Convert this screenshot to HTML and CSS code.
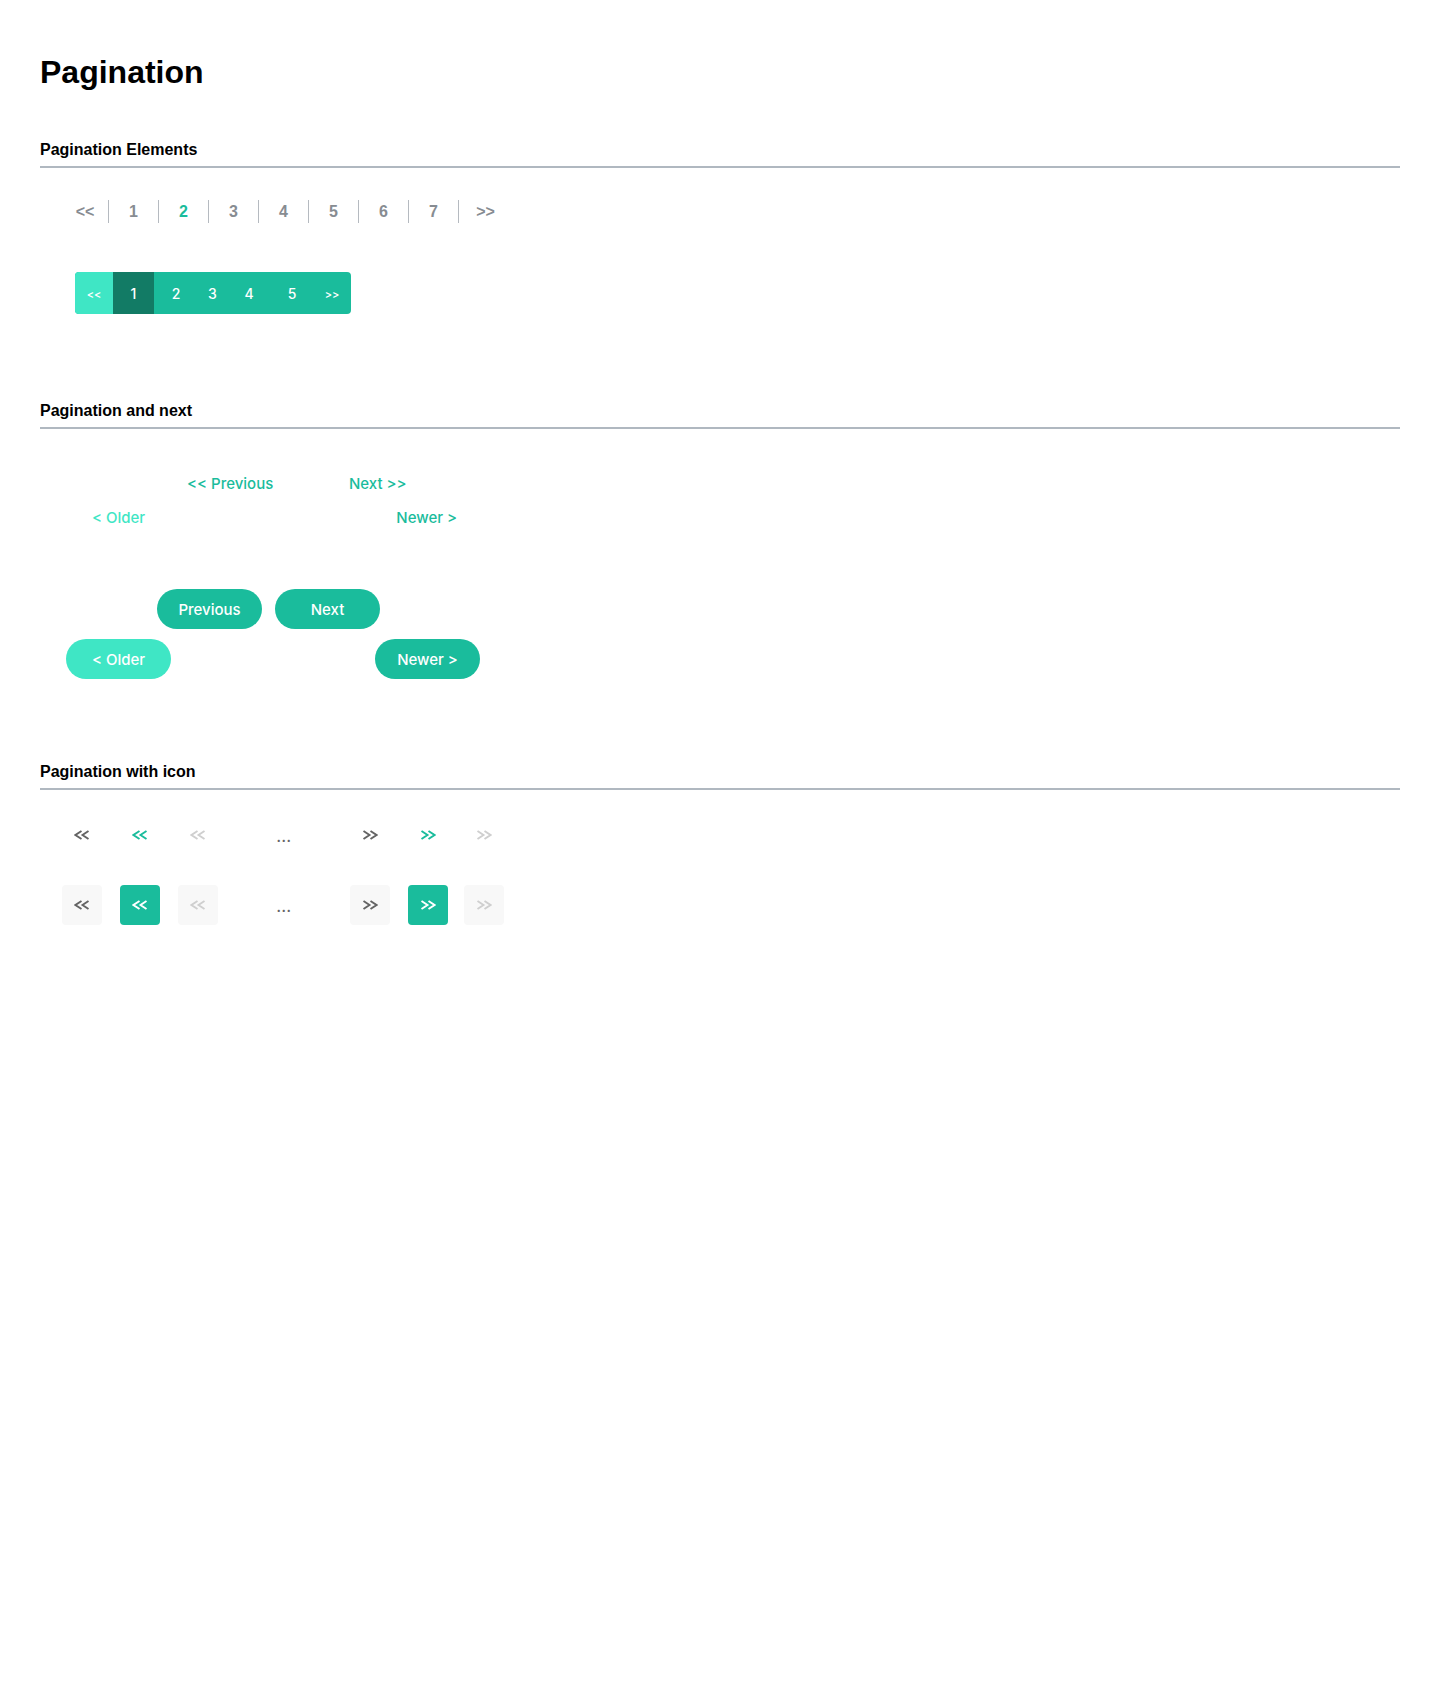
FILE: index.html
```html
<!DOCTYPE html>
<html lang="en">
<head>
<meta charset="utf-8">
<title>Pagination</title>
<link rel="stylesheet" href="styles.css">
</head>
<body>
<div class="page">
  <h1 class="title">Pagination</h1>

  <section class="sec sec-1">
    <h2 class="sec-title">Pagination Elements</h2>
    <ul class="pager-line">
      <li class="pl-item pl-first">&lt;&lt;</li>
      <li class="pl-item">1</li>
      <li class="pl-item active">2</li>
      <li class="pl-item">3</li>
      <li class="pl-item">4</li>
      <li class="pl-item">5</li>
      <li class="pl-item">6</li>
      <li class="pl-item">7</li>
      <li class="pl-item pl-last">&gt;&gt;</li>
    </ul>
    <ul class="pager-bar">
      <li class="pb-item pb-prev">&lt;&lt;</li>
      <li class="pb-item pb-current">1</li>
      <li class="pb-item pb-n2">2</li>
      <li class="pb-item pb-n3">3</li>
      <li class="pb-item pb-n4">4</li>
      <li class="pb-item pb-n5">5</li>
      <li class="pb-item pb-next">&gt;&gt;</li>
    </ul>
  </section>

  <section class="sec sec-2">
    <h2 class="sec-title">Pagination and next</h2>
    <div class="links-row links-row-1">
      <a class="txt-link link-prev">&lt;&lt; Previous</a>
      <a class="txt-link">Next &gt;&gt;</a>
    </div>
    <div class="links-row links-row-2">
      <a class="txt-link light">&lt; Older</a>
      <a class="txt-link">Newer &gt;</a>
    </div>
    <div class="btn-row btn-row-1">
      <a class="pill">Previous</a>
      <a class="pill">Next</a>
    </div>
    <div class="btn-row btn-row-2">
      <a class="pill light">&lt; Older</a>
      <a class="pill">Newer &gt;</a>
    </div>
  </section>

  <section class="sec sec-3">
    <h2 class="sec-title">Pagination with icon</h2>
    <div class="icon-row icon-row-1">
      <span class="ico dark"><svg viewBox="0 0 16 10" width="16" height="10"><path d="M7.5 1 L1.5 5 L7.5 9 M14.5 1 L8.5 5 L14.5 9"/></svg></span>
      <span class="ico green"><svg viewBox="0 0 16 10" width="16" height="10"><path d="M7.5 1 L1.5 5 L7.5 9 M14.5 1 L8.5 5 L14.5 9"/></svg></span>
      <span class="ico faint"><svg viewBox="0 0 16 10" width="16" height="10"><path d="M7.5 1 L1.5 5 L7.5 9 M14.5 1 L8.5 5 L14.5 9"/></svg></span>
      <span class="ico-dots">...</span>
      <span class="ico dark"><svg viewBox="0 0 16 10" width="16" height="10"><path d="M1.5 1 L7.5 5 L1.5 9 M8.5 1 L14.5 5 L8.5 9"/></svg></span>
      <span class="ico green"><svg viewBox="0 0 16 10" width="16" height="10"><path d="M1.5 1 L7.5 5 L1.5 9 M8.5 1 L14.5 5 L8.5 9"/></svg></span>
      <span class="ico faint ico-end"><svg viewBox="0 0 16 10" width="16" height="10"><path d="M1.5 1 L7.5 5 L1.5 9 M8.5 1 L14.5 5 L8.5 9"/></svg></span>
    </div>
    <div class="icon-row icon-row-2">
      <span class="ico box dark"><svg viewBox="0 0 16 10" width="16" height="10"><path d="M7.5 1 L1.5 5 L7.5 9 M14.5 1 L8.5 5 L14.5 9"/></svg></span>
      <span class="ico box filled"><svg viewBox="0 0 16 10" width="16" height="10"><path d="M7.5 1 L1.5 5 L7.5 9 M14.5 1 L8.5 5 L14.5 9"/></svg></span>
      <span class="ico box faint"><svg viewBox="0 0 16 10" width="16" height="10"><path d="M7.5 1 L1.5 5 L7.5 9 M14.5 1 L8.5 5 L14.5 9"/></svg></span>
      <span class="ico-dots">...</span>
      <span class="ico box dark"><svg viewBox="0 0 16 10" width="16" height="10"><path d="M1.5 1 L7.5 5 L1.5 9 M8.5 1 L14.5 5 L8.5 9"/></svg></span>
      <span class="ico box filled"><svg viewBox="0 0 16 10" width="16" height="10"><path d="M1.5 1 L7.5 5 L1.5 9 M8.5 1 L14.5 5 L8.5 9"/></svg></span>
      <span class="ico box faint ico-end"><svg viewBox="0 0 16 10" width="16" height="10"><path d="M1.5 1 L7.5 5 L1.5 9 M8.5 1 L14.5 5 L8.5 9"/></svg></span>
    </div>
  </section>
</div>
</body>
</html>
```
FILE: styles.css
```css
* { box-sizing: border-box; }
html, body { margin: 0; padding: 0; background: #fff; }
body {
  font-family: "Liberation Sans", Arial, sans-serif;
  color: #000;
}
.page {
  width: 1360px;
  margin-left: 40px;
  padding-top: 54px;
  padding-bottom: 40px;
}
.title {
  margin: 0;
  font-size: 32px;
  line-height: 37px;
  font-weight: 700;
}
.sec-title {
  margin: 0;
  font-size: 16px;
  line-height: 20px;
  font-weight: 700;
  padding-bottom: 6px;
  border-bottom: 2px solid #b0b8c0;
}
.sec-1 { margin-top: 49px; }
.sec-2 { margin-top: 87px; }
.sec-3 { margin-top: 83px; }

/* Section 1 — line pager */
.pager-line {
  list-style: none;
  margin: 32px 0 0 20px;
  padding: 0;
  display: flex;
  height: 23px;
}
.pl-item {
  width: 50px;
  height: 23px;
  display: flex;
  align-items: center;
  justify-content: center;
  border-left: 1px solid #b5bac0;
  font-size: 16px;
  font-weight: 700;
  color: #878c92;
}
.pl-item.pl-first {
  width: 48px;
  border-left: none;
  padding-left: 2px;
}
.pl-item.pl-last { padding-left: 4px; }
.pl-item.active { color: #1abc9c; }

/* Section 1 — green bar */
.pager-bar {
  list-style: none;
  margin: 49px 0 0 35px;
  padding: 0;
  display: flex;
  width: 276px;
  height: 42px;
  border-radius: 4px;
  overflow: hidden;
  background: #1abc9c;
  font-family: Inter, "Noto Sans", sans-serif;
  color: #fff;
}
.pb-item {
  display: flex;
  align-items: center;
  justify-content: center;
  height: 42px;
  font-size: 14px;
  font-weight: 500;
}
.pb-prev { width: 38px; background: #3fe6c5; font-size: 11px; padding-top: 2px; }
.pb-current { width: 41px; background: #127b65; padding-top: 1px; }
.pb-n2 { width: 44px; }
.pb-n3 { width: 29px; }
.pb-n4 { width: 44px; }
.pb-n5 { width: 42px; }
.pb-next { width: 38px; font-size: 11px; padding-top: 2px; }

/* Section 2 — text links */
.links-row {
  display: flex;
  font-family: Inter, "Noto Sans", sans-serif;
  font-size: 15px;
  font-weight: 500;
  line-height: 20px;
}
.links-row-1 {
  margin-top: 45px;
  padding-left: 147px;
}
.link-prev { width: 162px; }
.links-row-2 {
  margin-top: 14px;
  margin-left: 52px;
  width: 365px;
  justify-content: space-between;
}
.txt-link { color: #1abc9c; text-decoration: none; }
.txt-link.light { color: #3fe6c5; }

/* Section 2 — pill buttons */
.btn-row { display: flex; }
.btn-row-1 {
  margin-top: 61px;
  padding-left: 117px;
  gap: 13px;
}
.btn-row-2 {
  margin-top: 10px;
  margin-left: 26px;
  width: 414px;
  justify-content: space-between;
}
.pill {
  width: 105px;
  height: 40px;
  border-radius: 20px;
  background: #1abc9c;
  color: #fff;
  display: flex;
  align-items: center;
  justify-content: center;
  font-family: Inter, "Noto Sans", sans-serif;
  font-size: 15px;
  font-weight: 500;
  text-decoration: none;
}
.pill.light { background: #3fe6c5; }

/* Section 3 — icon pagers */
.icon-row {
  display: flex;
  gap: 18px;
  margin-left: 22px;
}
.icon-row-1 { margin-top: 25px; }
.icon-row-2 { margin-top: 30px; }
.ico {
  width: 40px;
  height: 40px;
  display: flex;
  align-items: center;
  justify-content: center;
  border-radius: 4px;
}
.ico.ico-end { margin-left: -2px; }
.ico svg path {
  fill: none;
  stroke: currentColor;
  stroke-width: 1.9;
  stroke-linecap: butt;
  stroke-linejoin: miter;
}
.ico.dark { color: #646464; }
.ico.green { color: #1abc9c; }
.ico.faint { color: #cfcfcf; }
.ico.box { background: #f8f8f8; }
.ico.box.filled { background: #1abc9c; color: #fff; }
.ico-dots {
  width: 96px;
  height: 40px;
  display: flex;
  align-items: center;
  justify-content: center;
  padding-top: 3px;
  font-family: Inter, "Noto Sans", sans-serif;
  font-size: 14px;
  font-weight: 600;
  color: #646464;
  letter-spacing: 0.5px;
}
```
